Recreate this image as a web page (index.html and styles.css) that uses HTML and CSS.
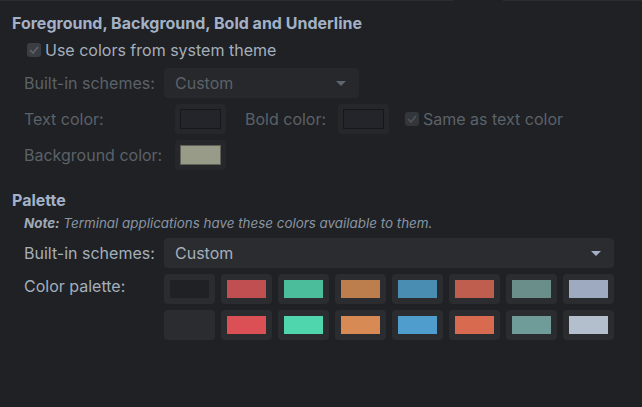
FILE: index.html
```html
<!DOCTYPE html>
<html>
<head>
<meta charset="utf-8">
<link rel="stylesheet" href="styles.css">
</head>
<body>
<div class="topline"><span class="seg a"></span><span class="seg gap"></span><span class="seg b"></span></div>
<div class="page">
  <h2 class="heading first">Foreground, Background, Bold and Underline</h2>
  <label class="check-row">
    <span class="checkbox"><svg width="10" height="8" viewBox="0 0 10 8"><path d="M1 4 L4 7 L9 1" fill="none" stroke="#5f646b" stroke-width="1.6"/></svg></span>
    <span class="check-text">Use colors from system theme</span>
  </label>
  <div class="row disabled schemes-row">
    <span class="label w140">Built-in schemes:</span>
    <div class="combo small"><span>Custom</span><span class="arrow dim"></span></div>
  </div>
  <div class="row disabled swatch-row">
    <span class="label w151">Text color:</span>
    <div class="cswatch"><span class="cinner dark"></span></div>
    <span class="label bold-label">Bold color:</span>
    <div class="cswatch"><span class="cinner dark"></span></div>
    <span class="checkbox small-check"><svg width="10" height="8" viewBox="0 0 10 8"><path d="M1 4 L4 7 L9 1" fill="none" stroke="#4f545b" stroke-width="1.6"/></svg></span>
    <span class="same">Same as text color</span>
  </div>
  <div class="row disabled swatch-row bg-row">
    <span class="label w151">Background color:</span>
    <div class="cswatch"><span class="cinner greige"></span></div>
  </div>

  <h2 class="heading palette-h">Palette</h2>
  <p class="note"><b>Note:</b> Terminal applications have these colors available to them.</p>
  <div class="row schemes2">
    <span class="label w140 bright">Built-in schemes:</span>
    <div class="combo wide"><span>Custom</span><span class="arrow"></span></div>
  </div>
  <div class="row palette-row">
    <span class="label w140 bright top">Color palette:</span>
    <div class="palette">
      <div class="sw"><span style="background:#1f2124"></span></div>
      <div class="sw"><span style="background:#c04f52"></span></div>
      <div class="sw"><span style="background:#4cbd9a"></span></div>
      <div class="sw"><span style="background:#bd7e4e"></span></div>
      <div class="sw"><span style="background:#4a8db2"></span></div>
      <div class="sw"><span style="background:#bf5e4e"></span></div>
      <div class="sw"><span style="background:#6a8f8a"></span></div>
      <div class="sw"><span style="background:#9eaabf"></span></div>
      <div class="sw"><span style="background:#2a2c30"></span></div>
      <div class="sw"><span style="background:#da5054"></span></div>
      <div class="sw"><span style="background:#4fd6ad"></span></div>
      <div class="sw"><span style="background:#d78a54"></span></div>
      <div class="sw"><span style="background:#4f9dcc"></span></div>
      <div class="sw"><span style="background:#d86b4f"></span></div>
      <div class="sw"><span style="background:#6f9c98"></span></div>
      <div class="sw"><span style="background:#b3bfcd"></span></div>
    </div>
  </div>
</div>
</body>
</html>
```

FILE: styles.css
```css
html, body {
  margin: 0;
  padding: 0;
  background: #1f2124;
  width: 642px;
  height: 407px;
  overflow: hidden;
}
body {
  font-family: Inter, "Noto Sans", sans-serif;
  font-size: 16px;
  color: #a3adb9;
}
.topline {
  display: flex;
  height: 1px;
}
.seg { display: block; height: 1px; }
.seg.a { width: 453px; background: #2b2d31; }
.seg.gap { width: 50px; background: #1f2124; }
.seg.b { flex: 1; background: #2b2d31; }
.page {
  display: flex;
  flex-direction: column;
}
.heading {
  margin: 0;
  font-size: 16px;
  font-weight: 700;
  color: #a3b1c7;
  padding-left: 12px;
  line-height: 18px;
}
.heading.first { margin-top: 13px; }
.check-row {
  display: flex;
  align-items: center;
  margin-top: 11px;
  padding-left: 27px;
  height: 14px;
}
.checkbox {
  width: 14px;
  height: 14px;
  border-radius: 3px;
  background: #3a3d42;
  display: flex;
  align-items: center;
  justify-content: center;
  flex: none;
}
.check-text {
  margin-left: 4px;
  color: #a5afbb;
  font-size: 16px;
}
.row {
  display: flex;
  align-items: center;
  padding-left: 24px;
}
.label {
  flex: none;
  font-size: 16px;
}
.w140 { width: 140px; }
.w151 { width: 151px; }
.disabled { color: #5c6269; }
.bright { color: #a5afbb; }
.schemes-row { margin-top: 11px; }
.combo {
  height: 30px;
  border-radius: 4px;
  background: #26282c;
  display: flex;
  align-items: center;
  justify-content: space-between;
  padding: 0 13px 0 11px;
  box-sizing: border-box;
  font-size: 16px;
}
.combo.small { width: 195px; color: #5c6269; }
.combo.wide { width: 450px; background: #2a2c30; color: #a5afbb; }
.arrow {
  width: 0;
  height: 0;
  border-left: 5px solid transparent;
  border-right: 5px solid transparent;
  border-top: 5px solid #a3b1c7;
}
.arrow.dim { border-top-color: #5d6570; }
.swatch-row { margin-top: 6px; }
.bg-row { margin-top: 6px; }
.cswatch {
  width: 51px;
  height: 30px;
  background: #25272b;
  border-radius: 4px;
  display: flex;
  align-items: center;
  justify-content: center;
  flex: none;
}
.cinner {
  width: 41px;
  height: 20px;
  box-sizing: border-box;
  border: 1px solid #16171a;
}
.cinner.dark { background: #23252a; }
.cinner.greige { background: #999b89; border-color: #606158; }
.bold-label { margin-left: 19px; width: 93px; }
.small-check { margin-left: 16px; background: #33363b; }
.same { margin-left: 4px; font-size: 16px; }
.palette-h { margin-top: 21px; }
.note {
  margin: 7px 0 0 24px;
  font-style: italic;
  font-size: 13.4px;
  color: #8a95a3;
  line-height: 14px;
}
.note b { color: #a0aab6; font-weight: 700; }
.schemes2 { margin-top: 8px; }
.palette-row { margin-top: 6px; align-items: flex-start; }
.label.top { margin-top: 2px; line-height: 20px; }
.palette {
  display: grid;
  grid-template-columns: repeat(8, 51px);
  grid-auto-rows: 30px;
  gap: 6px;
}
.sw {
  background: #2a2c30;
  border-radius: 4px;
  display: flex;
  align-items: center;
  justify-content: center;
}
.sw span {
  display: block;
  width: 39px;
  height: 18px;
}
```
